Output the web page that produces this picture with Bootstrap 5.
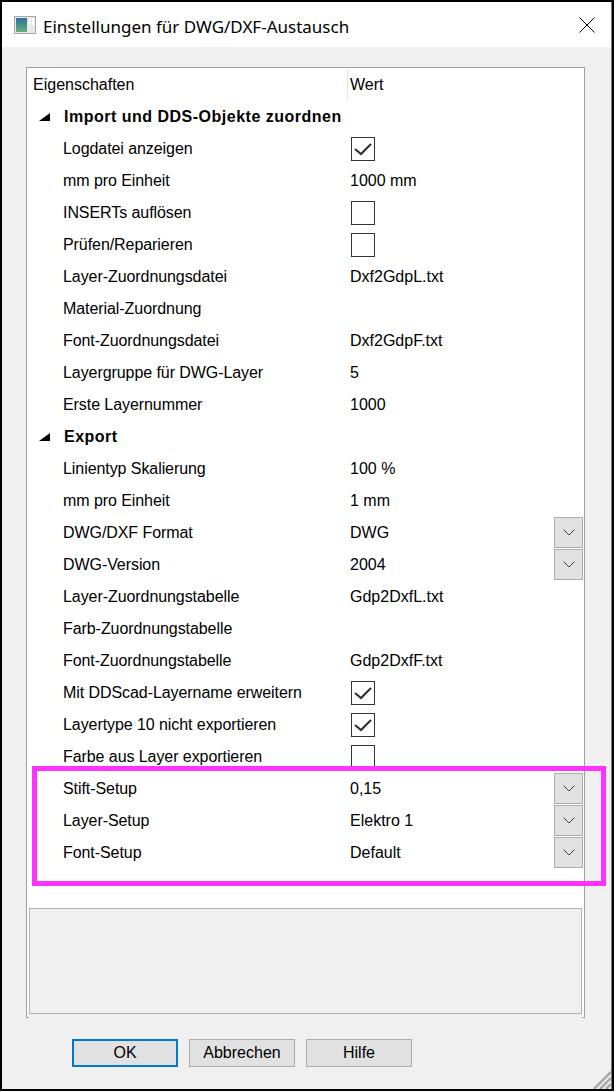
<!DOCTYPE html>
<html lang="de">
<head>
<meta charset="utf-8">
<title>Einstellungen für DWG/DXF-Austausch</title>
<link href="https://cdn.jsdelivr.net/npm/bootstrap@5.3.0/dist/css/bootstrap.min.css" rel="stylesheet">
<style>
html,body{margin:0;height:1092px;overflow:hidden;background:#fff}
.frame{height:1091px;background:#000;padding:2px 2px 0 2px}
.dlg{position:relative;width:610px;height:1087px;background:#f0f0f0;border-right:1px solid #777;font:16px/20px "Liberation Sans",Arial,sans-serif;color:#000;overflow:hidden}
.dlg-title{height:45px;background:#fff;padding:0 12px}
.dlg-title svg{flex:none}
.dlg-title .ttl{margin-left:7px;font-family:"Noto Sans",sans-serif;font-size:17px;position:relative;top:2px}
.closex{margin-left:auto;margin-right:4px}
.prop{margin:20px 0 0 24px;width:559px;height:951px;border:1px solid #a0a0a0;background:#fff;padding:1px 2px 2px}
.prop-head{height:32px;padding-left:4px}
.prop-head .c1{width:314px}
.prop-head .c2{height:32px;border-left:1px solid #e5e5e5;padding-left:2px;line-height:32px}
.prop-row{height:32px}
.prop-row .lbl{width:320px;padding-left:34px;flex:none;letter-spacing:-.07px}
.prop-row .val{width:0;flex:1 1 auto;padding-left:1px}
.prop-row .val .cb{margin-left:1px}
.grp{height:32px;padding-left:10px;font-weight:700;letter-spacing:.5px}
.grp .tri{width:0;height:0;border-style:solid;border-width:0 0 8px 11px;border-color:transparent transparent #000 transparent;margin-right:14px;margin-top:-1px}
.cb{display:block;width:24px;height:24px;border:1px solid #333;background:#fff}
.cb svg{display:block}
.dd{width:29px;height:31px;padding:0;border:1px solid #adadad;border-radius:0;background:#e1e1e1;margin-right:-1px;margin-top:-1px;display:flex;align-items:center;justify-content:center}
.spacer{height:35px}
.desc{height:106px;border:1px solid #b4b4b4;background:#f0f0f0;margin-top:4px}
.descwrap{background:#f0f0f0;height:112px}
.bar{margin:21px 0 0 70px;gap:11px}
.act{width:106px;height:28px;padding:0;border:1px solid #adadad;border-radius:0;background:#e1e1e1;color:#000;font:16px "Liberation Sans",Arial,sans-serif;--bs-btn-hover-bg:#e1e1e1}
.act.def{border:2px solid #0078d7}
.hilite{position:absolute;left:30px;top:764px;width:574px;height:120px;border:5px solid #ff33ff;pointer-events:none}
.grip{position:absolute;right:0;bottom:0}
</style>
</head>
<body>
<div class="frame">
<div class="dlg">
  <div class="dlg-title d-flex align-items-center">
    <svg width="22" height="18" viewBox="0 0 22 18"><rect x=".5" y=".5" width="21" height="17" fill="#e9e9e9" stroke="#a8a8a8"/><defs><linearGradient id="g" x1="0" y1="0" x2="0" y2="1"><stop offset="0" stop-color="#2f6f9f"/><stop offset="1" stop-color="#66b27a"/></linearGradient></defs><rect x="2" y="2" width="11" height="14" fill="url(#g)"/><rect x="15" y="2" width="1.500" height="7" fill="#fff"/><rect x="18" y="2" width="2" height="7" fill="#fff"/></svg>
    <span class="ttl">Einstellungen für DWG/DXF-Austausch</span>
    <svg class="closex" width="16" height="16" viewBox="0 0 16 16"><path d="M.5.5l15 15M15.500.5l-15 15" stroke="#000" fill="none"/></svg>
  </div>
  <div class="prop">
    <div class="prop-head d-flex align-items-center"><div class="c1">Eigenschaften</div><div class="c2">Wert</div></div>

    <div class="grp d-flex align-items-center"><span class="tri"></span>Import und DDS-Objekte zuordnen</div>
    <div class="prop-row d-flex align-items-center"><div class="lbl">Logdatei anzeigen</div><div class="val"><span class="cb"><svg width="22" height="22" viewBox="0 0 22 22"><path d="M3 11l6 5L19 6" fill="none" stroke="#333" stroke-width="2.200"/></svg></span></div></div>
    <div class="prop-row d-flex align-items-center"><div class="lbl">mm pro Einheit</div><div class="val">1000 mm</div></div>
    <div class="prop-row d-flex align-items-center"><div class="lbl">INSERTs auflösen</div><div class="val"><span class="cb"></span></div></div>
    <div class="prop-row d-flex align-items-center"><div class="lbl">Prüfen/Reparieren</div><div class="val"><span class="cb"></span></div></div>
    <div class="prop-row d-flex align-items-center"><div class="lbl">Layer-Zuordnungsdatei</div><div class="val">Dxf2GdpL.txt</div></div>
    <div class="prop-row d-flex align-items-center"><div class="lbl">Material-Zuordnung</div><div class="val"></div></div>
    <div class="prop-row d-flex align-items-center"><div class="lbl">Font-Zuordnungsdatei</div><div class="val">Dxf2GdpF.txt</div></div>
    <div class="prop-row d-flex align-items-center"><div class="lbl">Layergruppe für DWG-Layer</div><div class="val">5</div></div>
    <div class="prop-row d-flex align-items-center"><div class="lbl">Erste Layernummer</div><div class="val">1000</div></div>

    <div class="grp d-flex align-items-center"><span class="tri"></span>Export</div>
    <div class="prop-row d-flex align-items-center"><div class="lbl">Linientyp Skalierung</div><div class="val">100 %</div></div>
    <div class="prop-row d-flex align-items-center"><div class="lbl">mm pro Einheit</div><div class="val">1 mm</div></div>
    <div class="prop-row d-flex align-items-center"><div class="lbl">DWG/DXF Format</div><div class="val">DWG</div><button class="btn dd" type="button"><svg width="12" height="7" viewBox="0 0 12 7"><path d="M.5.5L6 6l5.500-5.500" fill="none" stroke="#444"/></svg></button></div>
    <div class="prop-row d-flex align-items-center"><div class="lbl">DWG-Version</div><div class="val">2004</div><button class="btn dd" type="button"><svg width="12" height="7" viewBox="0 0 12 7"><path d="M.5.5L6 6l5.500-5.500" fill="none" stroke="#444"/></svg></button></div>
    <div class="prop-row d-flex align-items-center"><div class="lbl">Layer-Zuordnungstabelle</div><div class="val">Gdp2DxfL.txt</div></div>
    <div class="prop-row d-flex align-items-center"><div class="lbl">Farb-Zuordnungstabelle</div><div class="val"></div></div>
    <div class="prop-row d-flex align-items-center"><div class="lbl">Font-Zuordnungstabelle</div><div class="val">Gdp2DxfF.txt</div></div>
    <div class="prop-row d-flex align-items-center"><div class="lbl">Mit DDScad-Layername erweitern</div><div class="val"><span class="cb"><svg width="22" height="22" viewBox="0 0 22 22"><path d="M3 11l6 5L19 6" fill="none" stroke="#333" stroke-width="2.200"/></svg></span></div></div>
    <div class="prop-row d-flex align-items-center"><div class="lbl">Layertype 10 nicht exportieren</div><div class="val"><span class="cb"><svg width="22" height="22" viewBox="0 0 22 22"><path d="M3 11l6 5L19 6" fill="none" stroke="#333" stroke-width="2.200"/></svg></span></div></div>
    <div class="prop-row d-flex align-items-center"><div class="lbl">Farbe aus Layer exportieren</div><div class="val"><span class="cb"></span></div></div>
    <div class="prop-row d-flex align-items-center"><div class="lbl">Stift-Setup</div><div class="val">0,15</div><button class="btn dd" type="button"><svg width="12" height="7" viewBox="0 0 12 7"><path d="M.5.5L6 6l5.500-5.500" fill="none" stroke="#444"/></svg></button></div>
    <div class="prop-row d-flex align-items-center"><div class="lbl">Layer-Setup</div><div class="val">Elektro 1</div><button class="btn dd" type="button"><svg width="12" height="7" viewBox="0 0 12 7"><path d="M.5.5L6 6l5.500-5.500" fill="none" stroke="#444"/></svg></button></div>
    <div class="prop-row d-flex align-items-center"><div class="lbl">Font-Setup</div><div class="val">Default</div><button class="btn dd" type="button"><svg width="12" height="7" viewBox="0 0 12 7"><path d="M.5.5L6 6l5.500-5.500" fill="none" stroke="#444"/></svg></button></div>
    <div class="spacer"></div>
    <div class="descwrap"><div class="desc"></div></div>
  </div>
  <div class="bar d-flex">
    <button class="btn act def" type="button">OK</button>
    <button class="btn act" type="button">Abbrechen</button>
    <button class="btn act" type="button">Hilfe</button>
  </div>
  <div class="hilite"></div>
  <svg class="grip" width="20" height="20" viewBox="0 0 20 20"><path d="M20 3L3 20M20 9L9 20M20 15L15 20" stroke="#a8a8a8" stroke-width="2.500" fill="none"/></svg>
</div>
</div>
</body>
</html>
